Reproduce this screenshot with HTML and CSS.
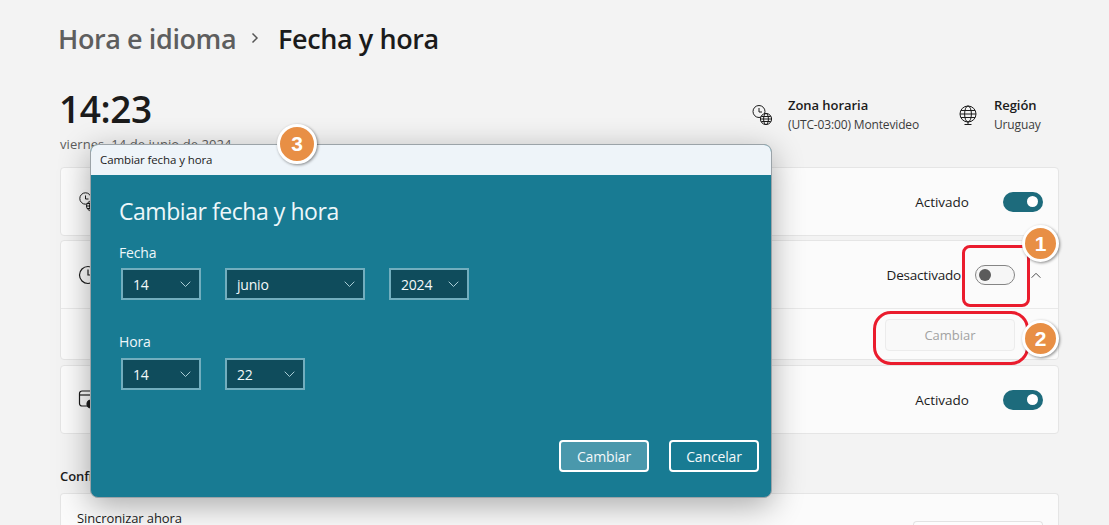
FILE: index.html
```html
<!DOCTYPE html>
<html lang="es">
<head>
<meta charset="utf-8">
<title>Fecha y hora</title>
<link rel="stylesheet" href="styles.css">
</head>
<body>
<main class="page">
  <header class="crumbs">
    <span class="crumb-parent">Hora e idioma</span>
    <svg class="crumb-sep" width="10" height="12" viewBox="0 0 10 12"><path d="M2.5 1.5 7 6l-4.5 4.500" fill="none" stroke="#555" stroke-width="1.5"/></svg>
    <span class="crumb-current">Fecha y hora</span>
  </header>
  <section class="clock-row">
    <div class="clock">
      <div class="time">14:23</div>
      <div class="date">viernes, 14 de junio de 2024</div>
    </div>
    <div class="info">
      <svg class="info-icon" width="22" height="22" viewBox="0 0 22 22" fill="none" stroke="#1b1b1b" stroke-width="1"><circle cx="8" cy="7.500" r="6"/><path d="M8 4v4h3"/><circle cx="15" cy="15" r="5.600" fill="#f3f3f3"/><ellipse cx="15" cy="15" rx="2.400" ry="5.600"/><path d="M9.500 15h11M10.300 12.500h9.400M10.300 17.500h9.400"/></svg>
      <div><div class="info-title">Zona horaria</div><div class="info-sub">(UTC-03:00) Montevideo</div></div>
    </div>
    <div class="info info-region">
      <svg class="info-icon" width="20" height="22" viewBox="0 0 20 22" fill="none" stroke="#1b1b1b" stroke-width="1"><circle cx="10" cy="10" r="8"/><ellipse cx="10" cy="10" rx="3.400" ry="8"/><path d="M2 10h16M3 6.500h14M3 13.500h14M10 18v3M6.500 20.500h7"/></svg>
      <div><div class="info-title">Región</div><div class="info-sub">Uruguay</div></div>
    </div>
  </section>
  <section class="card row">
    <svg class="row-icon" width="22" height="22" viewBox="0 0 22 22" fill="none" stroke="#1b1b1b" stroke-width="1"><circle cx="7.500" cy="7.500" r="5.700"/><path d="M7.500 4.500v3.500h3"/><circle cx="13.500" cy="15" r="5" fill="#fbfbfb"/><ellipse cx="13.500" cy="15" rx="2" ry="5"/><path d="M8.500 15h10M9 12.500h9M9 17.500h9"/></svg>
    <span class="row-state">Activado</span>
    <span class="toggle on"></span>
  </section>
  <section class="card group">
    <div class="row">
      <svg class="row-icon" width="22" height="22" viewBox="0 0 22 22" fill="none" stroke="#1b1b1b" stroke-width="1.200"><circle cx="10" cy="11" r="8.500"/><path d="M10 5.500V11h4"/></svg>
      <span class="row-state">Desactivado</span>
      <span class="toggle off"></span>
      <svg class="chev-up" width="12" height="8" viewBox="0 0 12 8"><path d="M1 6.500 6 1.500l5 5" fill="none" stroke="#333" stroke-width="1"/></svg>
    </div>
    <div class="subrow"><span class="btn-disabled">Cambiar</span></div>
  </section>
  <section class="card row">
    <svg class="row-icon" width="22" height="22" viewBox="0 0 22 22" fill="none" stroke="#1b1b1b" stroke-width="1.200"><rect x="1.500" y="2" width="15" height="15" rx="2.500"/><path d="M1.500 6h15"/><circle cx="13" cy="15" r="4" fill="#1b1b1b"/></svg>
    <span class="row-state">Activado</span>
    <span class="toggle on"></span>
  </section>
  <h2 class="section-title">Configuración adicional</h2>
  <section class="card row-sync">
    <span>Sincronizar ahora</span>
    <span class="btn-sync"></span>
  </section>
</main>

<div class="dialog">
  <div class="dialog-titlebar">Cambiar fecha y hora</div>
  <div class="dialog-body">
    <h1 class="dialog-heading">Cambiar fecha y hora</h1>
    <div class="field-label">Fecha</div>
    <div class="selects">
      <div class="select s-small"><span>14</span><svg class="caret" width="11" height="7" viewBox="0 0 11 7"><path d="m.7.700 4.800 4.800L10.300.7" fill="none" stroke="#a9cdd6" stroke-width="1"/></svg></div>
      <div class="select s-wide"><span>junio</span><svg class="caret" width="11" height="7" viewBox="0 0 11 7"><path d="m.7.700 4.800 4.800L10.300.7" fill="none" stroke="#a9cdd6" stroke-width="1"/></svg></div>
      <div class="select s-small"><span>2024</span><svg class="caret" width="11" height="7" viewBox="0 0 11 7"><path d="m.7.700 4.800 4.800L10.300.7" fill="none" stroke="#a9cdd6" stroke-width="1"/></svg></div>
    </div>
    <div class="field-label label-hora">Hora</div>
    <div class="selects">
      <div class="select s-small"><span>14</span><svg class="caret" width="11" height="7" viewBox="0 0 11 7"><path d="m.7.700 4.800 4.800L10.300.7" fill="none" stroke="#a9cdd6" stroke-width="1"/></svg></div>
      <div class="select s-small"><span>22</span><svg class="caret" width="11" height="7" viewBox="0 0 11 7"><path d="m.7.700 4.800 4.800L10.300.7" fill="none" stroke="#a9cdd6" stroke-width="1"/></svg></div>
    </div>
    <div class="dialog-actions">
      <span class="dialog-btn primary">Cambiar</span>
      <span class="dialog-btn">Cancelar</span>
    </div>
  </div>
</div>

<div class="mark mark-box1"></div>
<div class="mark mark-box2"></div>
<div class="badge badge-1">1</div>
<div class="badge badge-2">2</div>
<div class="badge badge-3">3</div>
</body>
</html>
```
FILE: styles.css
```css
* { box-sizing: border-box; }
html, body { margin: 0; height: 100%; }
body {
  width: 1109px;
  height: 525px;
  overflow: hidden;
  background: #f3f3f3;
  font-family: "Open Sans", "Noto Sans", sans-serif;
  color: #1b1b1b;
  position: relative;
}
.page { padding: 0 50px 0 60px; }
.crumbs { display: flex; align-items: center; height: 78px; padding-bottom: 2px; font-size: 27px; font-weight: 600; letter-spacing: -.4px; }
.crumb-parent { color: #5e5e5e; width: 189px; margin-left: -2px; }
.crumb-sep { margin-right: 18px; margin-left: 3px; }
.clock-row { display: flex; align-items: flex-start; height: 89px; }
.clock { width: 691px; }
.time { font-size: 37px; font-weight: 600; line-height: 52px; margin-top: 5px; letter-spacing: -.4px; margin-left: -1px; }
.date { font-size: 13px; color: #5d5d5d; line-height: 18px; letter-spacing: .07px; }
.info { display: flex; gap: 15px; align-items: center; height: 36px; margin-top: 19px; width: 207px; }
.info-region { width: 90px; gap: 16px; }
.info-title { font-size: 13px; font-weight: 600; line-height: 19px; letter-spacing: -.05px; }
.info-sub { font-size: 12px; color: #3c3c3c; line-height: 20px; letter-spacing: -.15px; }
.card { background: #fbfbfb; border: 1px solid #e5e5e5; border-radius: 4px; }
.row { display: flex; align-items: center; height: 69px; padding: 0 15px 0 17px; font-size: 13.500px; }
.row-icon { flex: none; }
.card.row { margin-bottom: 4px; }
.row-state { margin-left: auto; margin-right: 34px; padding-top: 1px; }
.toggle { position: relative; width: 40px; height: 20px; border-radius: 10px; flex: none; }
.toggle::after { content: ""; position: absolute; top: 5px; width: 10px; height: 10px; border-radius: 50%; }
.toggle.on { background: #1d6b7c; }
.toggle.on::after { right: 5px; background: #fff; width: 11px; height: 11px; top: 4.500px; }
.toggle.off { background: #f6f6f6; border: 1px solid #858585; margin-right: 15px; }
.toggle.off::after { left: 3px; top: 3px; width: 12px; height: 12px; background: #5b5b5b; }
.group { margin-bottom: 5px; height: 120px; }
.group .row { height: 68px; border-bottom: 1px solid #e9e9e9; padding-right: 16px; }
.group .row-state { margin-right: 14px; letter-spacing: -.2px; }
.chev-up { flex: none; padding-top: 1px; }
.subrow { display: flex; justify-content: flex-end; align-items: center; height: 50px; padding-right: 43px; padding-top: 1px; }
.btn-disabled { width: 130px; height: 32px; display: flex; align-items: center; justify-content: center; font-size: 13px; color: #a2a2a2; background: #f9f9f9; border: 1px solid #ececec; border-radius: 4px; }
.section-title { font-size: 13px; font-weight: 600; margin: 33px 0 7px; line-height: 19px; letter-spacing: -.1px; }
.row-sync { display: flex; justify-content: space-between; height: 32px; padding: 16px 15px 0 16px; font-size: 13px; line-height: 16px; letter-spacing: -.1px; border-bottom: 0; border-radius: 4px 4px 0 0; }
.btn-sync { width: 130px; height: 4px; margin-top: 11px; background: #fdfdfd; border: 1px solid #e3e3e3; border-bottom: 0; border-radius: 4px 4px 0 0; }

.dialog {
  position: absolute;
  left: 90px; top: 144px;
  width: 682px; height: 354px;
  border: 1px solid #9ba3a8;
  border-radius: 8px;
  overflow: hidden;
  background: #187b93;
  box-shadow: 0 8px 32px rgba(0,0,0,.32);
  display: flex; flex-direction: column;
}
.dialog-titlebar { height: 30px; flex: none; background: #eef4f9; font-size: 11.500px; line-height: 29px; padding-left: 9px; color: #1b1b1b; letter-spacing: -.1px; }
.dialog-body { flex: 1; display: flex; flex-direction: column; padding: 20px 12px 0 28px; color: #fff; }
.dialog-heading { margin: 0 0 16px; font-size: 23px; font-weight: 400; line-height: 32px; letter-spacing: -.45px; color: #eef7fa; }
.field-label { font-size: 14px; line-height: 20px; color: #eef7fa; letter-spacing: -.15px; margin-bottom: 5px; }
.label-hora { margin-top: 32px; margin-bottom: 6px; }
.selects { display: flex; gap: 24px; padding-left: 2px; }
.select { height: 32px; display: flex; align-items: center; justify-content: space-between; background: #0f4c5c; border: 2px solid #72aebe; padding: 0 8px 0 10px; font-size: 14px; color: #f4f9fa; letter-spacing: -.2px; }
.s-small { width: 80px; }
.s-wide { width: 140px; }
.dialog-actions { margin-top: auto; margin-bottom: 25px; display: flex; justify-content: flex-end; gap: 20px; }
.dialog-btn { width: 90px; height: 32px; border: 2px solid #fff; border-radius: 4px; display: flex; align-items: center; justify-content: center; font-size: 14px; color: #f4f9fa; letter-spacing: -.15px; }
.dialog-btn.primary { background: #4a98ac; }

.mark { position: absolute; border: 3px solid #ea1c2d; }
.mark-box1 { left: 962px; top: 245px; width: 68px; height: 62px; border-radius: 8px; }
.mark-box2 { left: 873px; top: 311px; width: 156px; height: 54px; border-radius: 18px; }
.badge {
  position: absolute;
  width: 37px; height: 37px;
  border-radius: 50%;
  background: #e88f45;
  border: 3px solid #fff;
  box-shadow: 1px 1px 3px rgba(0,0,0,.45);
  color: #fff;
  font-family: "Liberation Sans", sans-serif;
  font-weight: 700;
  font-size: 21px;
  display: flex; align-items: center; justify-content: center;
}
.badge-1 { left: 1022px; top: 225px; }
.badge-2 { left: 1022px; top: 320px; }
.badge-3 { left: 277px; top: 124px; width: 40px; height: 40px; }
```
